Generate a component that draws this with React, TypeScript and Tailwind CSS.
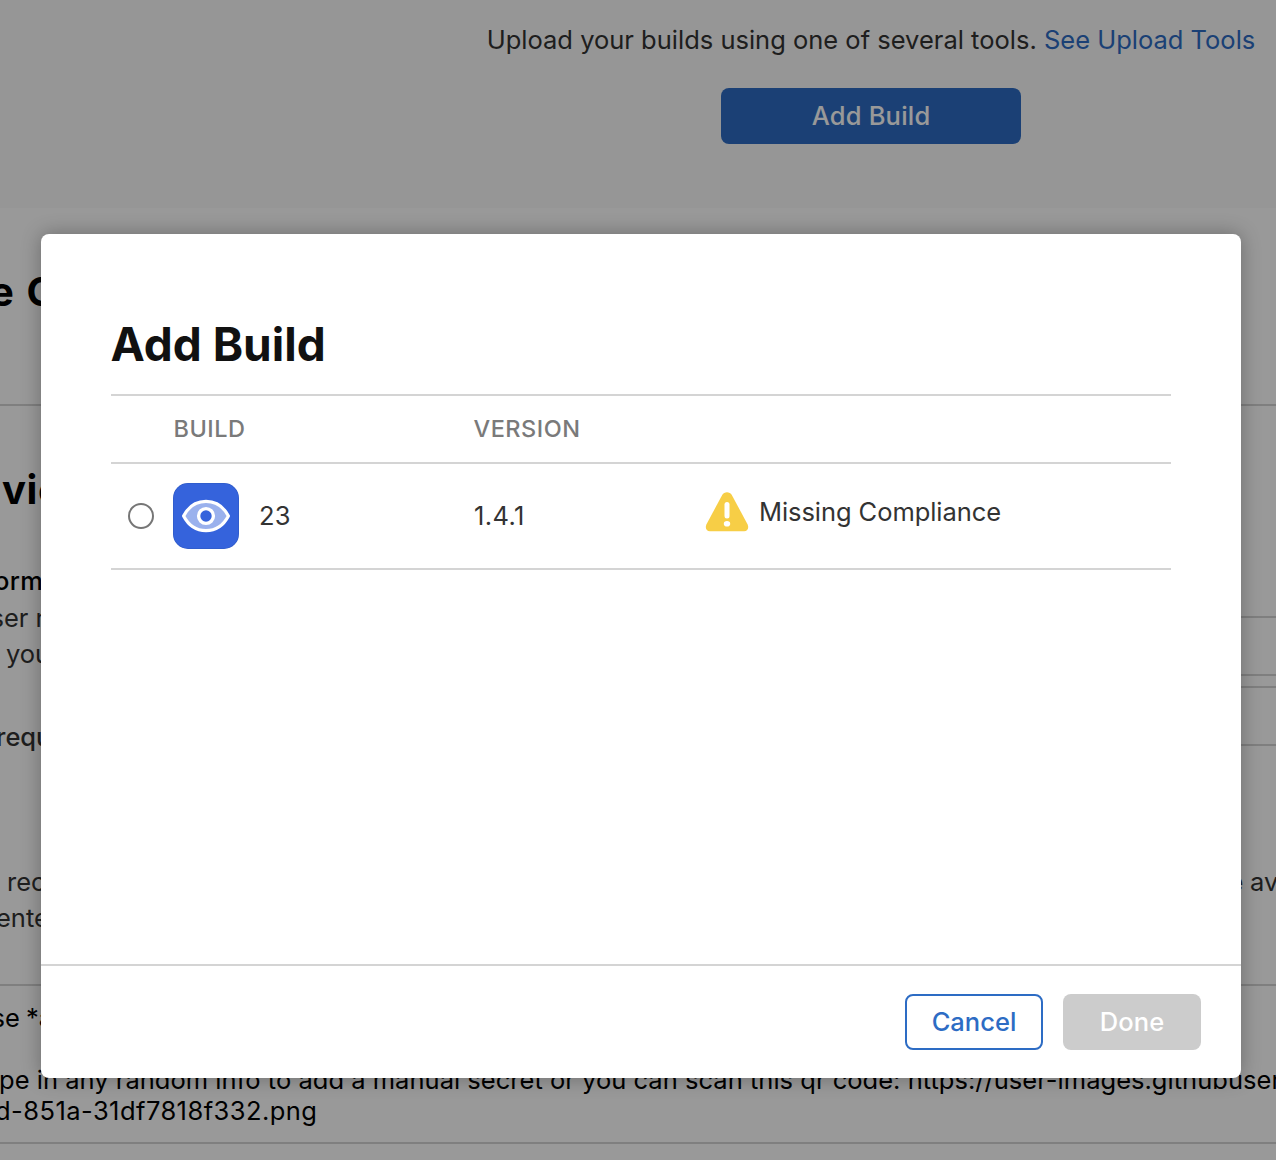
import type { ReactNode } from 'react';

function Line({ children, className = '' }: { children: ReactNode; className?: string }) {
  return <p className={`h-9 w-max leading-9 whitespace-pre text-[25.5px] ${className}`}>{children}</p>;
}

function AppIcon() {
  return (
    <svg width="66" height="66" viewBox="0 0 66 66" className="shrink-0">
      <rect width="66" height="66" rx="15" fill="#2f5bc8" />
      <rect x="0.7" y="0.7" width="64.6" height="64.6" rx="14.4" fill="#3563dc" />
      <path
        d="M10.6 33C15.5 23.6 23.8 18.4 33 18.4S50.500 23.600 55.400 33C50.500 42.400 42.200 47.600 33 47.600S15.500 42.400 10.600 33Z"
        fill="#9ab1ed"
        stroke="#fff"
        strokeWidth="3.2"
        strokeLinejoin="round"
      />
      <circle cx="33" cy="33" r="7.4" fill="#3563dc" stroke="#fff" strokeWidth="3.4" />
    </svg>
  );
}

function WarningIcon() {
  return (
    <svg width="44" height="40" viewBox="-0.5 0 44 40" className="shrink-0">
      <path
        d="M16.700 2.900C18.800 -.7 24.200 -.7 26.300 2.900L42 32.300C43.700 35.600 42.200 39.300 38.700 39.300H4.300C.8 39.300 -.7 35.600 1 32.300Z"
        fill="#f7ce46"
      />
      <rect x="19" y="10" width="5" height="16.500" rx="2.500" fill="#fff" />
      <ellipse cx="21.500" cy="31.700" rx="3.200" ry="2.800" fill="#fff" />
    </svg>
  );
}

function PageBehind() {
  return (
    <div className="flex h-full flex-col">
      <section className="flex h-52 shrink-0 flex-col items-center bg-[#fafafa] pt-[22px] pl-[466px]">
        <p className="h-9 leading-9 whitespace-nowrap text-[25.5px] text-[#333]">
          Upload your builds using one of several tools. <a className="text-[#2d6cc4]">See Upload Tools</a>
        </p>
        <button className="mt-[30px] h-14 w-[300px] rounded-lg bg-[#2d6cc4] text-[25.5px] font-medium tracking-[0.2px] text-white">
          Add Build
        </button>
      </section>

      <section className="h-[198px] shrink-0 border-b-2 border-[#d4d4d4] pt-[60px]">
        <h2 className="-ml-[10px] h-12 leading-[48px] whitespace-nowrap text-[40px] font-bold tracking-[1.6px]">e C</h2>
      </section>

      <section className="h-[580px] shrink-0 border-b-2 border-[#d4d4d4] pt-[60px]">
        <h2 className="ml-[2px] h-12 leading-[48px] whitespace-nowrap text-[40px] font-bold tracking-[0.6px]">vie</h2>
        <div className="mt-[50px] flex justify-between text-[#333]">
          <div>
            <Line className="-mt-px mb-px -ml-[6px] font-medium tracking-[0.3px] text-black">orm</Line>
            <Line className="-ml-[9.5px]">ser n</Line>
            <Line className="ml-[6px]">you</Line>
            <Line className="mt-[47px] -ml-[4px] font-medium">requ</Line>
            <Line className="mt-[109px] ml-[7px]">rec</Line>
            <Line className="-ml-[4px]">ente</Line>
          </div>
          <div className="w-[76px] overflow-hidden pt-[52px]">
            <div className="h-[60px] border-y-2 border-[#d4d4d4]" />
            <div className="mt-[10px] h-[60px] border-y-2 border-[#d4d4d4]" />
            <Line className="mt-[118px] ml-[28.5px] [word-spacing:-0.5px]">e av</Line>
          </div>
        </div>
      </section>

      <section className="h-[158px] shrink-0 border-b-2 border-[#d4d4d4] pt-4 leading-[31px] whitespace-pre text-[25.5px] text-black">
        <p className="-ml-[8.5px] w-max [word-spacing:-1px]">se *a</p>
        <p className="mt-[31px] -ml-[1px] w-max tracking-[0.02px]">
          pe in any random info to add a manual secret or you can scan this qr code: https://user-images.githubuserc
        </p>
        <p className="-ml-[5px] w-max tracking-[0.45px]">d-851a-31df7818f332.png</p>
      </section>
    </div>
  );
}

function AddBuildDialog() {
  return (
    <div
      role="dialog"
      className="absolute top-[234px] left-[41px] flex h-[844px] w-[1200px] flex-col rounded-lg bg-white shadow-[0_0_20px_rgba(0,0,0,0.3)]"
    >
      <div className="flex-1 px-[70px] pt-[82px]">
        <h1 className="-ml-[0.5px] h-14 leading-[56px] text-[46px] font-bold text-[#111]">Add Build</h1>
        <div className="mt-[22px] flex h-[70px] items-center border-y-2 border-[#d4d4d4] text-[23.5px] font-medium tracking-[0.5px] text-[#7a7a7a]">
          <span className="ml-[62.5px] w-[300px]">BUILD</span>
          <span>VERSION</span>
        </div>
        <div className="flex h-[106px] items-center border-b-2 border-[#d4d4d4] text-[25.5px] text-[#333]">
          <span className="ml-[17px] size-[26px] rounded-full border-2 border-[#767676]" />
          <span className="ml-[19px] flex w-[300px] items-center gap-5 tracking-[0.3px]">
            <AppIcon />
            <span>23</span>
          </span>
          <span className="w-[232px] pl-px tracking-[0.4px]">1.4.1</span>
          <span className="mb-2 flex items-center gap-[10px] tracking-[-0.07px]">
            <WarningIcon />
            <span>Missing Compliance</span>
          </span>
        </div>
      </div>
      <div className="flex h-[114px] justify-end gap-5 border-t-2 border-[#d4d4d4] pt-7 pr-10 text-[25.5px] font-medium">
        <button className="h-14 w-[138px] rounded-lg border-2 border-[#2d6cc4] text-[#2d6cc4]">Cancel</button>
        <button className="h-14 w-[138px] rounded-lg bg-[#ccc] tracking-[0.1px] text-white">Done</button>
      </div>
    </div>
  );
}

export default function App() {
  return (
    <main className="relative h-[1160px] w-[1276px] overflow-hidden bg-white font-['Inter',sans-serif]">
      <PageBehind />
      <div className="absolute inset-0 bg-black/40" />
      <AddBuildDialog />
    </main>
  );
}
